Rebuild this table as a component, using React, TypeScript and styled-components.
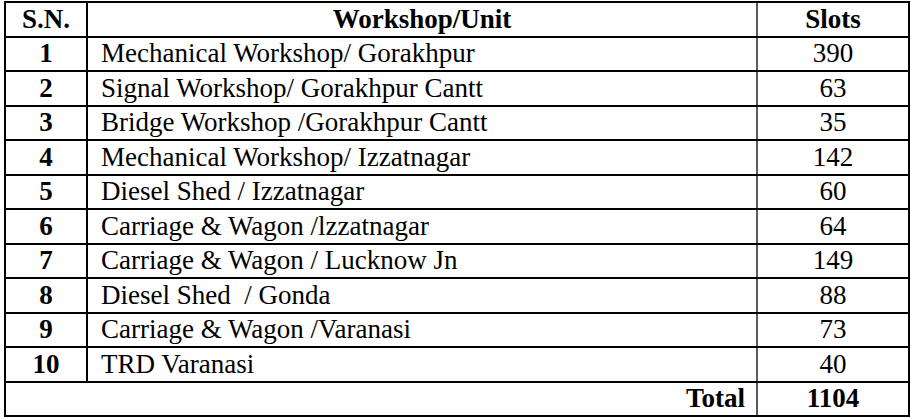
import React from "react";
import styled, {createGlobalStyle} from "styled-components";

const GlobalStyle = createGlobalStyle`
  html, body {
    margin: 0;
    padding: 0;
    background: #fff;
  }
  body {
    font-family: "Liberation Serif", "Times New Roman", serif;
    color: #000;
  }
`

const Page = styled.div`
  padding: 1px 0 0 4px;
`

const TABLE = styled.table`
  width: 904px;
  border-collapse: collapse;
  table-layout: fixed;
  border: 2px solid #000;
  font-size: 27px;
  line-height: 1;
`

const TR = styled.tr`
  height: 34.5px;
`

const TH = styled.th<{ $grey?: boolean }>`
  border-top: 2px solid #000;
  border-bottom: 2px solid #000;
  border-left: 2px solid ${p => (p.$grey ? "#5a5a5a" : "#000")};
  font-weight: bold;
  text-align: center;
  padding: 0;
`

const TD = styled.td<{ $align?: "left" | "center" | "right"; $bold?: boolean; $grey?: boolean }>`
  border-top: 2px solid #000;
  border-bottom: 2px solid #000;
  border-left: 2px solid ${p => (p.$grey ? "#5a5a5a" : "#000")};
  text-align: ${p => p.$align || "left"};
  font-weight: ${p => (p.$bold ? "bold" : "normal")};
  padding: 0 ${p => (p.$align === "right" ? "11px" : "0")} 0 ${p => (p.$align === "left" ? "13px" : "0")};
  white-space: pre;
  vertical-align: middle;
`

const rows = [
    {id: 1, unit: "Mechanical Workshop/ Gorakhpur", slots: 390},
    {id: 2, unit: "Signal Workshop/ Gorakhpur Cantt", slots: 63},
    {id: 3, unit: "Bridge Workshop /Gorakhpur Cantt", slots: 35},
    {id: 4, unit: "Mechanical Workshop/ Izzatnagar", slots: 142},
    {id: 5, unit: "Diesel Shed / Izzatnagar", slots: 60},
    {id: 6, unit: "Carriage & Wagon /lzzatnagar", slots: 64},
    {id: 7, unit: "Carriage & Wagon / Lucknow Jn", slots: 149},
    {id: 8, unit: "Diesel Shed  / Gonda", slots: 88},
    {id: 9, unit: "Carriage & Wagon /Varanasi", slots: 73},
    {id: 10, unit: "TRD Varanasi", slots: 40},
];

const App = () => {
    const total = rows.reduce((sum, r) => sum + r.slots, 0);

    return (
        <>
            <GlobalStyle/>
            <Page>
                <TABLE>
                    <colgroup>
                        <col style={{width: 82}}/>
                        <col style={{width: 670}}/>
                        <col style={{width: 152}}/>
                    </colgroup>
                    <thead>
                    <TR>
                        <TH>S.N.</TH>
                        <TH>Workshop/Unit</TH>
                        <TH $grey>Slots</TH>
                    </TR>
                    </thead>
                    <tbody>
                    {rows.map(row => (
                        <TR key={row.id}>
                            <TD $align="center" $bold>{row.id}</TD>
                            <TD $align="left">{row.unit}</TD>
                            <TD $align="center" $grey>{row.slots}</TD>
                        </TR>
                    ))}
                    <TR>
                        <TD colSpan={2} $align="right" $bold>Total</TD>
                        <TD $align="center" $bold $grey>{total}</TD>
                    </TR>
                    </tbody>
                </TABLE>
            </Page>
        </>
    )
}

export default App;
